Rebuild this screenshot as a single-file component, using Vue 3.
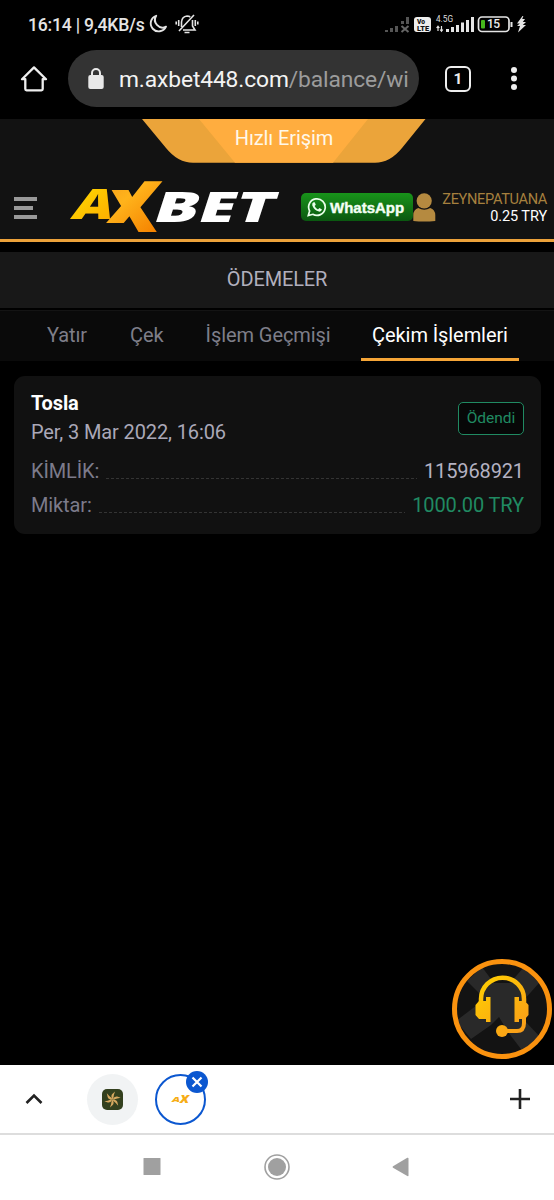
<script setup>
const tabs = [
  { label: 'Yatır', cls: 't1' },
  { label: 'Çek', cls: 't2' },
  { label: 'İşlem Geçmişi', cls: 't3' },
  { label: 'Çekim İşlemleri', cls: 't4 active' },
]
const petals = [0, 60, 120, 180, 240, 300]
</script>

<template>
  <div class="screen">
    <header class="status">
      <span class="clock">16:14 | 9,4KB/s</span>
      <svg class="moon" width="20" height="20" viewBox="0 0 20 20"><path d="M8.2 1.8A8 8 0 1 0 18 12.7A7.6 7.6 0 0 1 8.2 1.8Z" fill="none" stroke="#e4e4e4" stroke-width="1.9" stroke-linejoin="round" /></svg>
      <svg class="bell" width="24" height="22" viewBox="0 0 24 22" fill="none" stroke="#e4e4e4" stroke-width="1.6">
        <path d="M6.5 14V9Q7 3.5 12 3Q14 3.1 15.2 4M17.5 7V13L20 17H8M9.5 19.5H14.5M4 18L19 2M3.7 7V13M1.2 8.5V11.5M20.3 7V13M22.8 8.5V11.5" />
      </svg>
      <svg class="signals" width="146" height="24" viewBox="0 0 146 24">
        <g fill="#555"><path d="M1 18h3v2h-3zM6 16h3v4h-3zM11 14h3v6h-3zM17 9h3v3h-3zM22 5h3v7h-3z" /></g>
        <path d="M17.5 14L24.5 20M24.5 14L17.5 20" stroke="#666" stroke-width="2" />
        <rect x="30" y="5" width="17" height="15" rx="3" fill="#eee" />
        <text x="33" y="12" class="vo" textLength="8" lengthAdjust="spacingAndGlyphs">Vo</text>
        <text x="33" y="18.5" class="vo" textLength="12" lengthAdjust="spacingAndGlyphs">LTE</text>
        <text x="52" y="10" class="gen" textLength="17" lengthAdjust="spacingAndGlyphs">4.5G</text>
        <path d="M54 19V14.5M52.6 16L54 14.2L55.4 16M57.5 14V19M56.1 17.5L57.5 19.3L58.9 17.5" fill="none" stroke="#e5e5e5" stroke-width="1.2" />
        <path d="M62 17h3v3h-3zM67 15h3v5h-3zM72 13h3v7h-3zM77 10.5h3v9.5h-3zM82 8h3v12h-3zM87 5h3v15h-3z" fill="#e5e5e5" />
        <rect x="94.5" y="5" width="30.5" height="14.5" rx="3.5" fill="none" stroke="#e5e5e5" stroke-width="1.7" />
        <rect x="97" y="8" width="4" height="8.6" rx="1" fill="#45b81c" />
        <text x="103" y="16.3" class="batt" textLength="13">15</text>
        <rect x="126.5" y="10" width="2" height="5" fill="#e5e5e5" />
        <path d="M138.5 4L133 11.4H135.8L133 14H136L134 20.5L142 13H138.8L142 10H138.8L141 7H138.2L139.4 4Z" fill="#e5e5e5" />
      </svg>
    </header>

    <div class="toolbar">
      <svg class="home" width="28" height="28" viewBox="0 0 28 28"><path d="M2 14.2H5.3V24Q5.3 25.3 6.6 25.3H21.4Q22.7 25.3 22.7 24V14.2H26L14 2.4Z" fill="none" stroke="#eee" stroke-width="2.3" stroke-linejoin="round" /></svg>
      <div class="url">
        <svg width="16" height="22" viewBox="0 0 16 22"><rect x=".3" y="7" width="15.4" height="14" rx="2" fill="#e8e8e8" /><path d="M4 8V5a4 4 0 0 1 8 0V8" fill="none" stroke="#e8e8e8" stroke-width="2" /></svg>
        <span class="address">m.axbet448.com<i>/balance/wi</i></span>
      </div>
      <span class="tabcount">1</span>
      <svg class="dots" width="8" height="26" viewBox="0 0 8 26" fill="#eee"><circle cx="4" cy="4" r="3" /><circle cx="4" cy="12.5" r="3" /><circle cx="4" cy="21" r="3" /></svg>
    </div>

    <section class="sitehead">
      <div class="quick">
        <svg width="284" height="44" viewBox="0 0 284 44">
          <path d="M0 0H283.5L260 29Q248 43.8 233 43.8H51Q36 43.8 24 29Z" fill="#eba43a" />
          <path d="M57 0H226L191 43.8H93Z" fill="#ffad3f" />
        </svg>
        <span>Hızlı Erişim</span>
      </div>
      <div class="brandrow">
        <div class="burger"><b></b><b></b><b></b></div>
        <svg class="logo" width="214" height="56" viewBox="0 0 214 56">
          <defs>
            <linearGradient id="gold" x1="0" y1="0" x2="1" y2="1"><stop offset="0" stop-color="#ffdc00" /><stop offset="1" stop-color="#fca800" /></linearGradient>
            <linearGradient id="goldX" x1="0" y1="0" x2=".6" y2="1"><stop offset="0" stop-color="#f0941b" /><stop offset=".5" stop-color="#ffb31b" /><stop offset="1" stop-color="#f58200" /></linearGradient>
            <clipPath id="arms"><path d="M30 12H64V0H110V56H64V45H30Z" /></clipPath>
          </defs>
          <text class="mark" x="0" y="0" textLength="40" lengthAdjust="spacingAndGlyphs" transform="translate(1 41) skewX(-18)" font-size="42" fill="url(#gold)">A</text>
          <g clip-path="url(#arms)"><text class="mark" x="0" y="0" textLength="59" lengthAdjust="spacingAndGlyphs" transform="translate(29 54) skewX(-8)" font-size="71" fill="url(#goldX)">X</text></g>
          <text class="mark" x="0" y="0" textLength="120" lengthAdjust="spacingAndGlyphs" transform="translate(82 44) skewX(-18)" font-size="42" fill="#fff">BET</text>
        </svg>
        <div class="whatsapp">
          <svg width="20" height="20" viewBox="0 0 20 20"><path d="M1.3 18.6L2.6 14A8.3 8.3 0 1 1 5.8 17.3Z" fill="none" stroke="#eaffea" stroke-width="1.7" /><path d="M6.6 5.2Q4.6 6.3 5.3 8.4Q7.2 13.2 12 14.6Q14.2 15 15 12.5L12.4 11L11 12.4Q8.6 11.3 7.6 9L8.8 7.8L7.7 5.2Z" fill="#eaffea" /></svg>
          <span>WhatsApp</span>
        </div>
        <svg class="person" width="23" height="29" viewBox="0 0 23 29" fill="#b58a40"><circle cx="11.2" cy="7.8" r="7.6" /><path d="M.3 28V22Q.5 16.5 5.3 15Q11.3 18.6 17.2 15Q22 16.5 22.3 22V28Q11 29 .3 28Z" /></svg>
        <div class="account"><span class="user">ZEYNEPATUANA</span><span class="money">0.25 TRY</span></div>
      </div>
    </section>

    <h1 class="title"><span>ÖDEMELER</span></h1>
    <nav class="tabs"><a v-for="t in tabs" :key="t.label" :class="t.cls"><span>{{ t.label }}</span></a></nav>

    <article class="card">
      <div class="top">
        <div><div class="name"><span>Tosla</span></div><div class="date"><span>Per, 3 Mar 2022, 16:06</span></div></div>
        <span class="badge">Ödendi</span>
      </div>
      <div class="row"><span class="key k1">KİMLİK:</span><i class="leader"></i><span class="val v1">115968921</span></div>
      <div class="row"><span class="key k2">Miktar:</span><i class="leader"></i><span class="val v2">1000.00 TRY</span></div>
    </article>

    <svg class="support" width="102" height="102" viewBox="0 0 102 102">
      <defs><clipPath id="disc"><circle cx="51" cy="50" r="46" /></clipPath><linearGradient id="hs" gradientUnits="userSpaceOnUse" x1="25" y1="20" x2="78" y2="75"><stop offset="0" stop-color="#ffd000" /><stop offset="1" stop-color="#f9991b" /></linearGradient></defs>
      <circle cx="51" cy="50" r="46" fill="#131313" />
      <g clip-path="url(#disc)" fill="#292929"><path d="M16 22L31 8L43 24H59L73 8L88 24L72 42V60L93 82L76 98L57 73L48 58L40 66L20 80L5 62L30 43V36Z" /></g>
      <circle cx="51" cy="50" r="47.5" fill="none" stroke="#fa920f" stroke-width="5" />
      <g fill="none" stroke="url(#hs)"><path d="M30 43V40A21.2 21 0 0 1 73 40V43" stroke-width="4.5" /><path d="M73 58V64Q73 72 66 72H52" stroke-width="4" /></g>
      <g fill="url(#hs)"><path d="M35 38H39.5V63H35V60H28L24.5 56V46L28 42H35ZM63.5 38H68V42H74L77.5 46V56L74 60H68V63H63.5Z" /><circle cx="51" cy="72" r="6" /></g>
    </svg>

    <footer class="groupbar">
      <svg class="chev" width="18" height="12" viewBox="0 0 18 12"><path d="M1.5 10L9 2.5L16.5 10" fill="none" stroke="#222" stroke-width="2.6" /></svg>
      <div class="fav plain">
        <svg width="21" height="21" viewBox="0 0 21 21"><rect width="21" height="21" rx="5" fill="#33401e" /><g fill="#d6a860"><path v-for="p in petals" :key="p" :transform="`rotate(${p} 10.5 10.5)`" d="M10.5 10.5Q8.4 7 10.3 5L13 2.5Q11.6 6 11.4 9Z" /></g></svg>
      </div>
      <div class="fav current">
        <svg class="minilogo" width="18" height="9" viewBox="0 0 18 9"><text class="mini" x="0" y="7" textLength="8" lengthAdjust="spacingAndGlyphs">A</text><text class="mini x" x="8" y="8" textLength="9" lengthAdjust="spacingAndGlyphs">X</text></svg>
        <div class="close"><svg width="12" height="12" viewBox="0 0 12 12"><path d="M1.5 1.5L10.5 10.5M10.5 1.5L1.5 10.5" stroke="#fff" stroke-width="2.2" /></svg></div>
      </div>
      <svg class="plus" width="20" height="20" viewBox="0 0 20 20"><path d="M10 0V20M0 10H20" stroke="#222" stroke-width="2.6" /></svg>
    </footer>
    <div class="sysnav">
      <svg width="554" height="65" viewBox="0 0 554 65" fill="#a0a0a0"><rect x="143.5" y="23" width="17" height="17" rx=".5" /><circle cx="277" cy="32" r="9" /><circle cx="277" cy="32" r="12" fill="none" stroke="#a0a0a0" stroke-width="1.6" /><path d="M393 31.3L407.3 22.8Q408.5 22.4 408.5 23.5V40.5Q408.5 41.5 407.3 41L393 32.7Q392 32 393 31.3Z" /></svg>
    </div>
  </div>
</template>

<style>
body { background: #000; }
</style>
<style scoped>
* { box-sizing: border-box; }
.screen { position: relative; width: 554px; height: 1200px; background: #000; overflow: hidden; font-family: Roboto, sans-serif; display: flex; flex-direction: column; white-space: nowrap; }
.status { height: 48px; display: flex; align-items: center; padding-left: 28px; color: #e4e4e4; flex: none; }
.clock { font-size: 17.6px; font-weight: 500; width: 120px; line-height: 50px; letter-spacing: -.22px; padding-top: 1px; }
.bell { margin-left: 7px; }
.signals { margin: 0 24px 0 auto; }
.vo { font: 900 7px Roboto, sans-serif; fill: #111; }
.gen { font: 400 8.5px Roboto, sans-serif; fill: #ddd; }
.batt { font: 500 12px Roboto, sans-serif; fill: #eee; }
.toolbar { height: 71px; display: flex; align-items: flex-start; flex: none; padding-left: 20px; }
.home { margin-top: 17px; }
.url { width: 351px; height: 57px; margin: 2px 0 0 20px; border-radius: 29px; background: #333; display: flex; align-items: center; padding-left: 20px; gap: 15px; }
.address { font-size: 22.8px; letter-spacing: -.12px; color: #f3f3f3; line-height: 57px; padding-top: 2px; }
.address i { font-style: normal; color: #9c9c9c; }
.tabcount { width: 26px; height: 26px; border: 2.5px solid #eee; border-radius: 6px; margin: 18px 0 0 26px; color: #eee; font-size: 15.5px; font-weight: 700; line-height: 22px; text-align: center; }
.dots { margin: 18px 0 0 39px; }
.sitehead { height: 123px; background: #121212; border-bottom: 3px solid #eba13a; flex: none; display: flex; flex-direction: column; }
.quick { width: 284px; height: 44px; margin-left: 142px; position: relative; text-align: center; }
.quick svg { display: block; }
.quick span { position: absolute; inset: 0; font-size: 20px; letter-spacing: -.1px; line-height: 39px; color: #fff8ea; }
.brandrow { flex: 1; display: flex; align-items: flex-start; padding-left: 14px; }
.burger { width: 23px; margin-top: 34px; display: flex; flex-direction: column; gap: 5px; }
.burger b { height: 4px; background: #999; }
.burger b:nth-child(2) { width: 19px; }
.logo { margin: 15px 0 0 32px; flex: none; overflow: visible; }
.mark { font-family: "Open Sans", sans-serif; font-weight: 800; }
.whatsapp { width: 112px; height: 28px; margin: 30px 0 0 18px; border-radius: 5px; background: linear-gradient(#18941a, #0a5710); display: flex; align-items: center; padding-left: 6px; gap: 3px; flex: none; }
.whatsapp span { color: #f4fff4; font: 700 15px "Liberation Sans", sans-serif; -webkit-text-stroke: .4px #f4fff4; }
.person { margin-top: 30px; flex: none; }
.account { flex: 1; display: flex; flex-direction: column; align-items: flex-end; padding: 27px 7px 0 0; }
.account span { line-height: 18px; }
.user { color: #a6803e; font-size: 14.6px; letter-spacing: -.35px; }
.money { color: #fff; font-size: 14.5px; letter-spacing: -.1px; }
.title { margin: 10px 0 2px; height: 56px; line-height: 55px; background: #181818; text-align: center; font-size: 20px; letter-spacing: -.15px; font-weight: 400; color: #b1afbd; flex: none; }
.tabs { height: 51px; background: #0a0a0a; border-top: 1px solid #141414; display: flex; color: #7e7e89; font-size: 20px; letter-spacing: -.08px; line-height: 49px; flex: none; padding-left: 47px; }
.t2 { margin-left: 43px; }
.t3 { margin-left: 42px; }
.active { width: 158px; text-align: center; color: #fff; border-bottom: 3px solid #f5a537; margin-left: auto; margin-right: 35px; }
.card { margin: 15px 13px 0 14px; height: 158px; padding: 13px 17px; border-radius: 11px; background: #111; font-size: 20px; letter-spacing: -.12px; flex: none; }
.top { display: flex; justify-content: space-between; height: 65px; }
.name, .date { line-height: 28px; height: 28px; }
.name { color: #fff; font-weight: 700; }
.date { color: #aaa8b8; line-height: 30px; }
.badge { width: 66px; height: 33px; margin-top: 13px; border: 1.5px solid #208a62; border-radius: 5px; background: #070707; color: #208a62; font-size: 15.5px; letter-spacing: 0; line-height: 31px; text-align: center; }
.row { display: flex; height: 34px; line-height: 34px; align-items: flex-start; }
.key { color: #7c7b8b; }
.leader { flex: 1; height: 25px; margin: 0 7px; background: repeating-linear-gradient(90deg, #343434 0 3px, transparent 3px 5px) left bottom / 100% 1px no-repeat; }
.val { color: #b4b2c2; }
.v2 { color: #208a62; }
.support { position: absolute; left: 451px; top: 959px; }
.groupbar { margin-top: auto; height: 70px; background: #fff; border-bottom: 2px solid #ddd; display: flex; align-items: center; padding-left: 25px; flex: none; }
.fav { width: 51px; height: 51px; border-radius: 50%; display: flex; align-items: center; justify-content: center; }
.plain { background: #f1f3f4; margin-left: 44px; }
.current { position: relative; border: 2.5px solid #0b57d0; margin-left: 17px; }
.minilogo { overflow: visible; }
.close { position: absolute; left: 29px; top: -5px; width: 22px; height: 22px; border-radius: 50%; background: #0b57d0; display: flex; align-items: center; justify-content: center; }
.mini { font: italic 800 7px "Open Sans", sans-serif; fill: #f6ad16; }
.mini.x { font-size: 10px; }
.plus { margin-left: auto; margin-right: 24px; }
.sysnav { height: 65px; background: #fff; flex: none; }
.sysnav svg { display: block; }
</style>
